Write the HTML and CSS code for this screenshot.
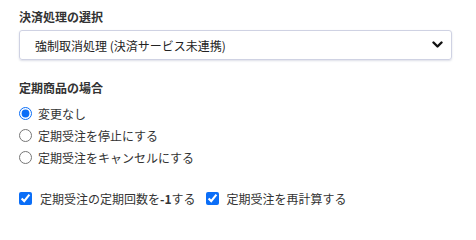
FILE: index.html
```html
<!DOCTYPE html>
<html lang="ja">
<head>
<meta charset="utf-8">
<link rel="stylesheet" href="styles.css">
</head>
<body>
<div class="wrap">
  <section class="group">
    <h3 class="title">決済処理の選択</h3>
    <div class="select">
      <span class="select-text">強制取消処理 (決済サービス未連携)</span>
      <svg class="chev" width="11" height="8" viewBox="0 0 11 8"><path d="M1.5 1.5 L5.5 5.5 L9.5 1.5" fill="none" stroke="#111" stroke-width="2.4" stroke-linecap="round" stroke-linejoin="round"/></svg>
    </div>
  </section>
  <section class="group group2">
    <h3 class="title">定期商品の場合</h3>
    <div class="radios">
      <label class="opt"><input type="radio" name="r" checked><span>変更なし</span></label>
      <label class="opt"><input type="radio" name="r"><span>定期受注を停止にする</span></label>
      <label class="opt"><input type="radio" name="r"><span>定期受注をキャンセルにする</span></label>
    </div>
  </section>
  <div class="checks">
    <label class="chk"><input type="checkbox" checked><span>定期受注の定期回数を<b>-1</b>する</span></label>
    <label class="chk"><input type="checkbox" checked><span>定期受注を再計算する</span></label>
  </div>
</div>
</body>
</html>
```

FILE: styles.css
```css
html, body {
  margin: 0;
  padding: 0;
  background: #fff;
}
body {
  font-family: "Noto Sans CJK JP", "Noto Sans", sans-serif;
  font-size: 12px;
  color: #333;
}
.wrap {
  padding: 8px 24px 0 19px;
}
.title {
  margin: 0;
  font-size: 12px;
  font-weight: bold;
  line-height: 18px;
  color: #333;
}
.select {
  margin-top: 4px;
  height: 30px;
  box-sizing: border-box;
  border: 1px solid #cfd2e3;
  border-radius: 3px;
  box-shadow: 0 1px 2px rgba(60, 70, 120, 0.18);
  display: flex;
  align-items: center;
  justify-content: space-between;
  padding: 0 8px 0 15px;
}
.select-text {
  color: #222;
}
.chev {
  display: block;
}
.group2 {
  margin-top: 19px;
}
.radios {
  margin-top: 5px;
  display: flex;
  flex-direction: column;
}
.opt, .chk {
  display: flex;
  align-items: center;
  color: #333;
}
.opt {
  height: 22px;
}
.chk {
  height: 18px;
}
.opt input {
  width: 13px;
  height: 13px;
  margin: 0 6px 0 0;
  accent-color: #0b6ef7;
}
.checks {
  margin-top: 21px;
  display: flex;
  gap: 10px;
}
.chk input {
  width: 13px;
  height: 13px;
  margin: 0 8px 0 0;
  accent-color: #0b6ef7;
}
.chk b {
  font-weight: bold;
}
```
